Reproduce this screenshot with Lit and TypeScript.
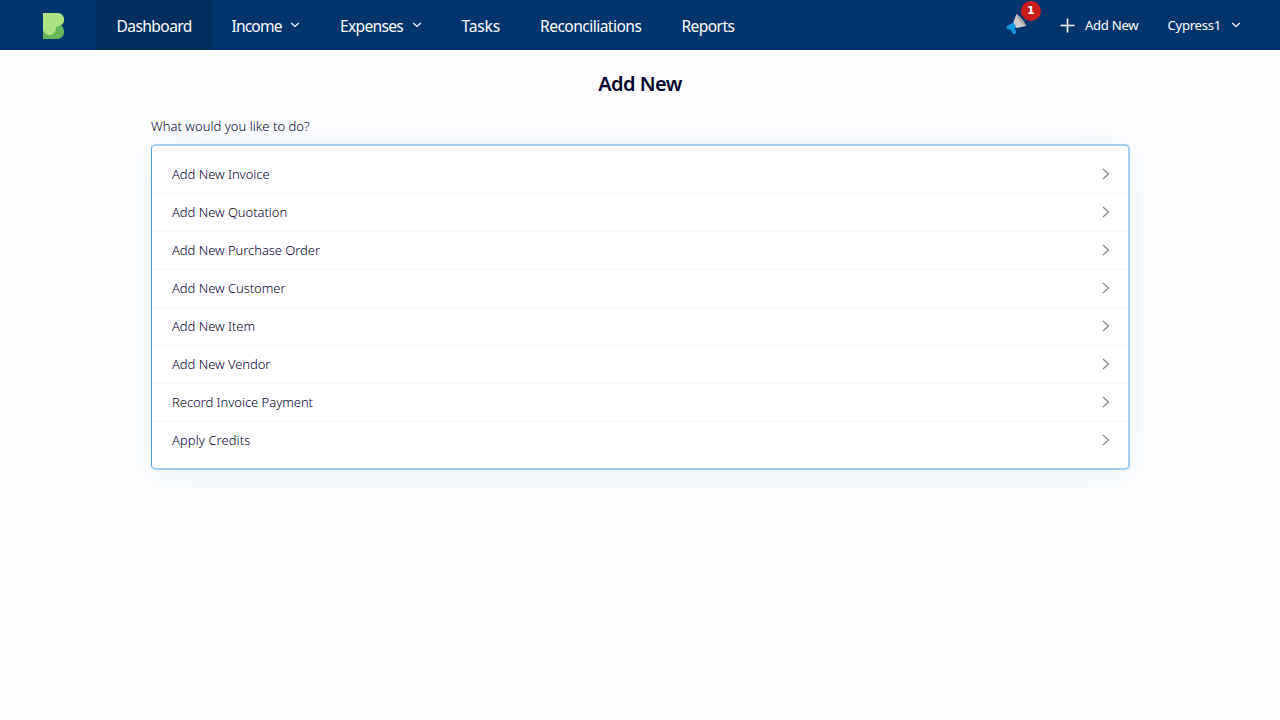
import { LitElement, html, css, svg } from "lit";
import { customElement } from "lit/decorators.js";

interface NavItem { text: string; width: number; spacing: number; menu?: boolean; active?: boolean; }

const nav: NavItem[] = [
  { text: "Dashboard", width: 115.5, spacing: -0.6, active: true },
  { text: "Income", width: 108.5, spacing: -0.85, menu: true },
  { text: "Expenses", width: 121.5, spacing: -0.7, menu: true },
  { text: "Tasks", width: 78.5, spacing: -0.2 },
  { text: "Reconciliations", width: 141.5, spacing: -0.55 },
  { text: "Reports", width: 94, spacing: -0.6 },
];

const actions = [
  "Add New Invoice", "Add New Quotation", "Add New Purchase Order", "Add New Customer",
  "Add New Item", "Add New Vendor", "Record Invoice Payment", "Apply Credits",
];

const down = html`<svg width="10" height="6" viewBox="0 0 10 6">${svg`<path d="M1.2 1L5 4.5 8.8 1" fill="none" stroke="#fff" stroke-width="1.15"/>`}</svg>`;

@customElement("app-root")
export class AppRoot extends LitElement {
  static styles = css`
    :host { display: block; height: 720px; background: #fefefe; color: #00002d; font-family: "Noto Sans", "Open Sans", sans-serif; }
    * { box-sizing: border-box; }
    svg { display: block; flex: none; }
    .bar { display: flex; height: 50px; background: #00366d; color: #fff; }
    .logo { width: 96px; padding: 13px 0 0 43px; }
    .nav { display: flex; }
    .item { display: flex; align-items: center; justify-content: space-between; padding: 0 20px; font-size: 15.6px; white-space: nowrap; }
    .item span { padding-top: 1px; }
    .active { background: #002e5d; padding-left: 20.5px; }
    .right { display: flex; align-items: center; margin-left: auto; padding-right: 39px; font-size: 13.2px; letter-spacing: -0.3px; }
    .news { position: relative; margin-right: 32px; }
    .badge { position: absolute; left: 15px; top: -13px; width: 20px; height: 20px; border-radius: 50%; background: #cc1d1d; font: 600 11px/20px "DejaVu Sans", sans-serif; letter-spacing: 0; text-align: center; }
    .add, .user { display: flex; align-items: center; white-space: nowrap; }
    .add { gap: 10px; margin-right: 29px; }
    .user { gap: 10px; }
    .title { margin: 0; padding-top: 19px; text-align: center; font-size: 20px; line-height: 30px; font-weight: 600; letter-spacing: -0.55px; }
    .main { width: 979px; margin: 17px 0 0 151px; }
    .ask { font-size: 13px; line-height: 20px; height: 28px; font-weight: 300; letter-spacing: 0.03px; }
    .card { height: 326px; padding: 10px 0; border: 2px solid #a2cdf7; border-left: 1px solid #4f9ce5; border-radius: 5px; background: #fff; box-shadow: 0 4px 36px rgba(75, 156, 240, 0.14); }
    .row { display: flex; align-items: center; justify-content: space-between; height: 38px; padding: 0 18px 1px 20px; font-size: 13px; font-weight: 300; letter-spacing: -0.04px; border-bottom: 1px solid #f8f8f8; }
    .row:last-child { border-color: transparent; letter-spacing: 0.07px; }
  `;

  render() {
    return html`
      <header class="bar">
        <div class="logo">
          <svg width="21" height="26" viewBox="0 0 21 26">
            <path d="M0 0h14c8 0 9 9 4 12.5 5 3.500 4 13.500-4 13.500H0z" fill="#65b75a"/>
            <path d="M0 0h14c8 0 9 9 4 12.500-2 .5-5 .5-5 2.500C13 24 1 24 0 16z" fill="#ace184"/>
          </svg>
        </div>
        <nav class="nav">
          ${nav.map(n => html`<div class="item ${n.active ? "active" : ""}" style="width:${n.width}px;letter-spacing:${n.spacing}px"><span>${n.text}</span>${n.menu ? down : ""}</div>`)}
        </nav>
        <div class="right">
          <div class="news">
            <svg width="22" height="22" viewBox="0 0 22 22">
              <path d="M1 12l7-4 3.500 5-3 1.500 2 4-3 2-3-5C2 16 0 14 1 12z" fill="#109be5"/>
              <path d="M7.500 8L10.500 0c4 3 8 7.500 9.500 12l-9.500 2z" fill="#d0cfcf"/>
              <path d="M10.500 0c4 3 8 7.500 9.500 12-5-2.500-9-7.500-9.500-12z" fill="#a9a9a9"/>
            </svg>
            <span class="badge">1</span>
          </div>
          <div class="add">
            <svg width="15" height="15" viewBox="0 0 15 15"><path d="M7.5 0.5v14M0.5 7.5h14" stroke="#fff" stroke-width="1.6"/></svg>
            <span>Add New</span>
          </div>
          <div class="user"><span>Cypress1</span>${down}</div>
        </div>
      </header>
      <h1 class="title">Add New</h1>
      <main class="main">
        <div class="ask">What would you like to do?</div>
        <div class="card">
          ${actions.map(a => html`<div class="row"><span>${a}</span><svg width="8" height="12" viewBox="0 0 8 12"><path d="M1 1l5.500 5L1 11" fill="none" stroke="#858585" stroke-width="1.15"/></svg></div>`)}
        </div>
      </main>`;
  }
}
